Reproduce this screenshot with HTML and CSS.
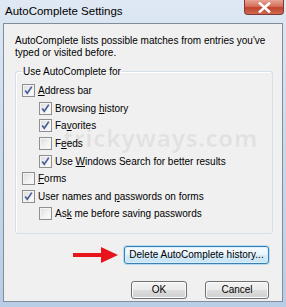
FILE: index.html
```html
<!DOCTYPE html>
<html lang="en">
  <head>
    <meta charset="UTF-8" />
    <title>AutoComplete Settings</title>
    <link rel="stylesheet" href="styles.css">
  </head>
  <body>
    <div class="window">
      <div class="titlebar">
        <span class="title">AutoComplete Settings</span>
        <span class="close">
          <svg width="13" height="11" viewBox="0 0 13 11">
            <path d="M2 1.5 L11 9.5 M11 1.5 L2 9.5" stroke="#fff" stroke-width="2.6" stroke-linecap="square" />
          </svg>
        </span>
      </div>

      <div class="client">
        <p class="intro">
          AutoComplete lists possible matches from entries you've typed or visited before.
        </p>

        <fieldset class="group">
          <legend>Use AutoComplete for</legend>

          <label class="row">
            <span class="box checked"></span><span><u>A</u>ddress bar</span>
          </label>
          <label class="row sub">
            <span class="box checked"></span><span>Browsing <u>h</u>istory</span>
          </label>
          <label class="row sub">
            <span class="box checked"></span><span>Fa<u>v</u>orites</span>
          </label>
          <label class="row sub">
            <span class="box"></span><span>F<u>e</u>eds</span>
          </label>
          <label class="row sub">
            <span class="box checked"></span><span>Use <u>W</u>indows Search for better results</span>
          </label>
          <label class="row">
            <span class="box"></span><span><u>F</u>orms</span>
          </label>
          <label class="row">
            <span class="box checked"></span><span>User names and <u>p</u>asswords on forms</span>
          </label>
          <label class="row sub">
            <span class="box"></span><span>As<u>k</u> me before saving passwords</span>
          </label>
        </fieldset>

        <div class="delete-line">
          <svg class="arrow" width="46" height="18" viewBox="0 0 46 18">
            <path d="M0 7 H28 V1 L45 9 L28 17 V11 H0 Z" fill="#e8141b" />
          </svg>
          <button class="btn focused">Delete AutoComplete history...</button>
        </div>

        <div class="actions">
          <button class="btn ok">OK</button>
          <button class="btn cancel">Cancel</button>
        </div>

        <div class="watermark">trickyways.com</div>
      </div>
    </div>
  </body>
</html>
```

FILE: styles.css
```css
html,
body {
  margin: 0;
  height: 100%;
}

body {
  width: 286px;
  height: 307px;
  overflow: hidden;
  font: 10px "Liberation Sans", Arial, sans-serif;
  color: #000;
  background: linear-gradient(180deg, #dfe8f3 0%, #c9daee 45%, #b8cde6 100%);
}

.window {
  padding: 0 3px 6px 3px;
}

.titlebar {
  height: 23px;
  display: flex;
  justify-content: space-between;
  align-items: flex-start;
}

.title {
  padding: 5px 0 0 2px;
  font-size: 11.5px;
  color: #000;
}

.close {
  width: 40px;
  height: 15px;
  margin-right: -1px;
  display: flex;
  align-items: center;
  justify-content: center;
  border: 1px solid #7e3a34;
  border-top: none;
  border-radius: 0 0 4px 4px;
  background: linear-gradient(180deg, #e8a394 0%, #d5705c 45%, #c0432e 55%, #cf6b4f 100%);
  box-sizing: border-box;
}

.client {
  position: relative;
  height: 279px;
  box-sizing: border-box;
  border: 1px solid #7f8d9c;
  background: #f0f0f0;
  padding: 11px 10px 0 11px;
}

.intro {
  margin: 0;
  line-height: 12px;
  width: 256px;
}

.group {
  margin: 7px 0 0 0;
  padding: 5px 6px 10px 6px;
  border: 1px solid #d5dfe5;
  border-radius: 3px;
  box-shadow: inset 1px 1px 0 #fff;
  width: 244px;
}

.group legend {
  padding: 0 1px;
  margin-left: 0;
}

.row {
  display: flex;
  align-items: center;
  height: 17.6px;
  gap: 3px;
}

.row.sub {
  padding-left: 17px;
}

.box {
  width: 13px;
  height: 13px;
  box-sizing: border-box;
  border: 1px solid #8e8f8f;
  background: linear-gradient(135deg, #dcdcdc 0%, #f3f3f3 60%, #fdfdfd 100%);
  box-shadow: inset 0 0 0 1px #f4f4f4;
  flex: none;
}

.box.checked {
  background-image: url("data:image/svg+xml;utf8,<svg xmlns='http://www.w3.org/2000/svg' width='11' height='11' viewBox='0 0 11 11'><path d='M2.2 5.4 L4.3 8.3 L8.8 1.6' fill='none' stroke='%234a5f9a' stroke-width='1.7'/></svg>"),
    linear-gradient(135deg, #dcdcdc 0%, #f3f3f3 60%, #fdfdfd 100%);
  background-repeat: no-repeat;
}

.delete-line {
  display: flex;
  justify-content: flex-end;
  align-items: center;
  gap: 5px;
  margin: 12px 3px 0 0;
}

.btn {
  font: 10px "Liberation Sans", Arial, sans-serif;
  height: 18px;
  padding: 0 4px;
  color: #000;
  border: 1px solid #707070;
  border-radius: 3px;
  background: linear-gradient(180deg, #f2f2f2 0%, #ebebeb 50%, #dddddd 50%, #cfcfcf 100%);
  box-shadow: inset 0 0 0 1px #fbfbfb;
}

.btn.focused {
  width: 145px;
  border-color: #3c7fb1;
  background: linear-gradient(180deg, #f6fbfe 0%, #e8f4fc 50%, #d6ebf8 50%, #c6e3f6 100%);
  box-shadow: 0 0 0 1px #b7dbf2, inset 0 0 0 1px #d9eefb;
}

.actions {
  display: flex;
  justify-content: flex-end;
  gap: 18px;
  margin: 17px 3px 0 0;
}

.btn.ok {
  width: 56px;
}

.btn.cancel {
  width: 64px;
}

.watermark {
  position: absolute;
  left: 59px;
  top: 97px;
  font: bold 24px "Open Sans", "DejaVu Sans", sans-serif;
  letter-spacing: 0.5px;
  color: rgba(0, 0, 0, 0.06);
  pointer-events: none;
}
```
